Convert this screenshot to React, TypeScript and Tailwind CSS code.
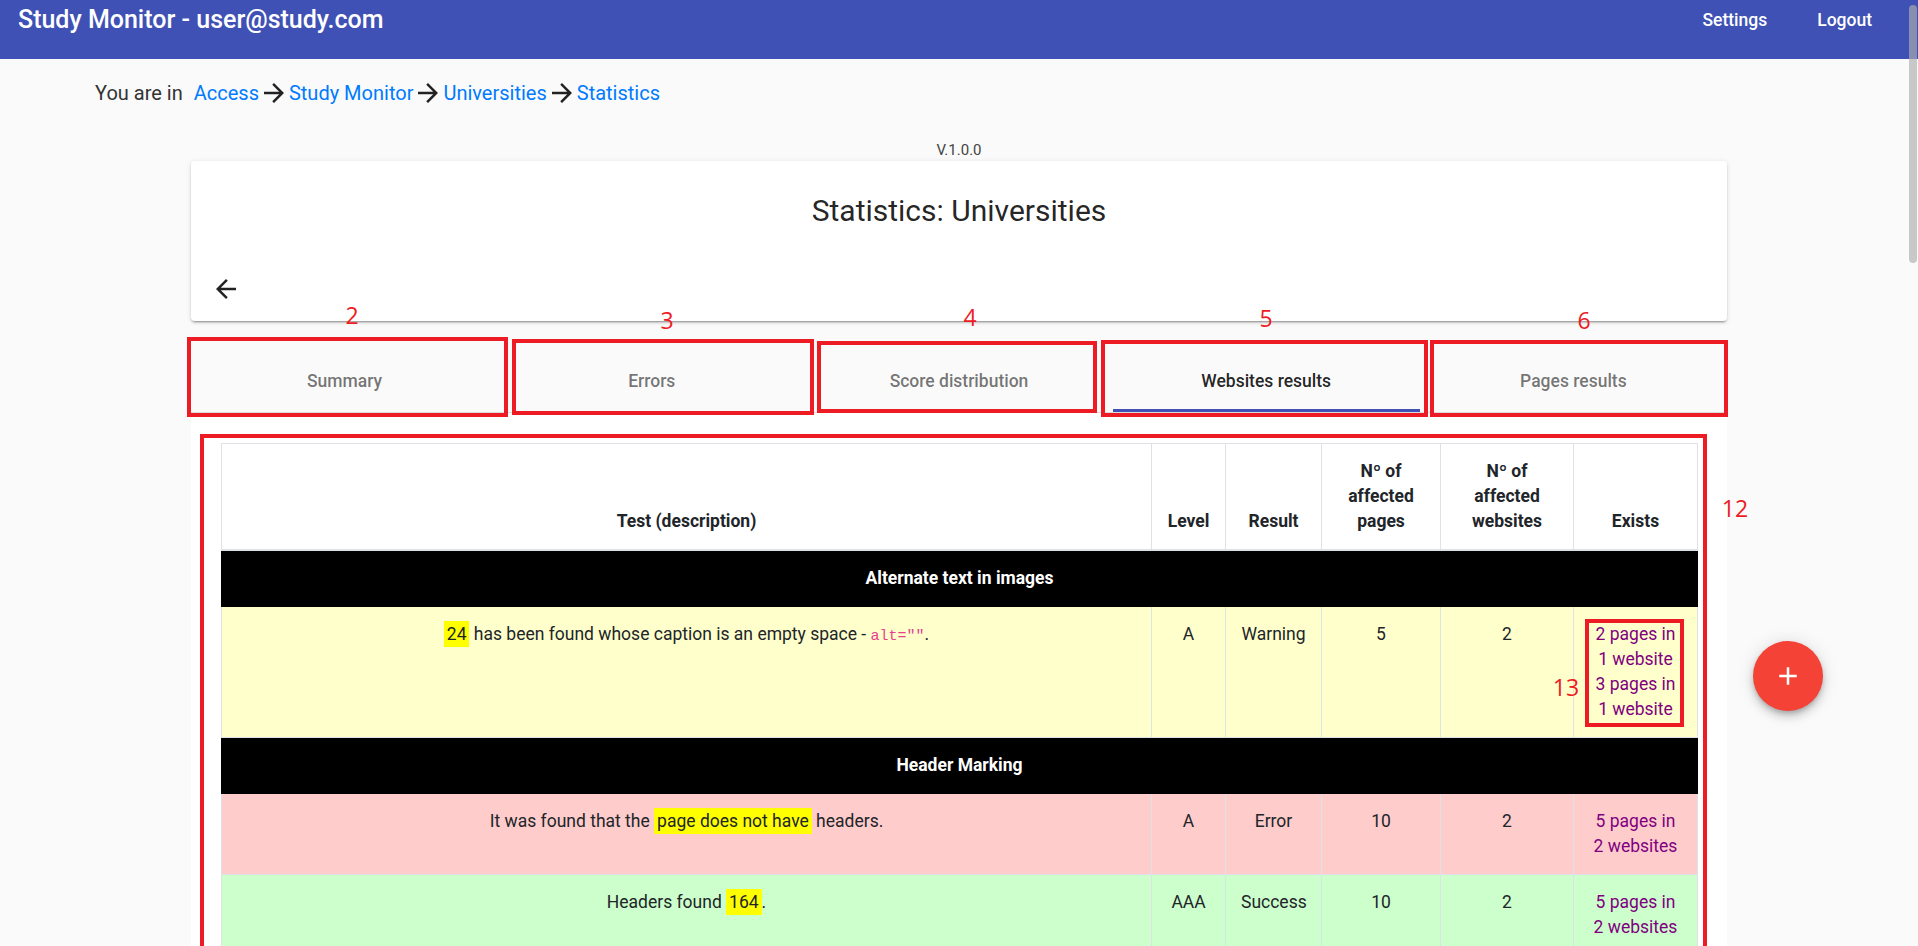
import React from "react";

const ArrowForward = ({ className }: { className?: string }) => (
  <svg viewBox="0 0 24 24" className={className} fill="currentColor">
    <path d="M12 4l-1.41 1.41L16.17 11H4v2h12.17l-5.58 5.59L12 20l8-8z" />
  </svg>
);

const ArrowBack = ({ className }: { className?: string }) => (
  <svg viewBox="0 0 24 24" className={className} fill="currentColor">
    <path d="M20 11H7.83l5.59-5.59L12 4l-8 8 8 8 1.41-1.41L7.83 13H20v-2z" />
  </svg>
);

const Plus = ({ className }: { className?: string }) => (
  <svg viewBox="0 0 24 24" className={className} fill="currentColor">
    <path d="M19 13h-6v6h-2v-6H5v-2h6V5h2v6h6v2z" />
  </svg>
);

const Mark = ({ children }: { children: React.ReactNode }) => (
  <span className="bg-[#ffff00] px-[3px] py-[3px]">{children}</span>
);

const tabs = ["Summary", "Errors", "Score distribution", "Websites results", "Pages results"];

const Exists = ({ lines }: { lines: string[] }) => (
  <div className="text-[#800080]">
    {lines.map((l, i) => (
      <div key={i}>{l}</div>
    ))}
  </div>
);

export default function App() {
  const th = "border border-[#dee2e6] border-b-2 align-bottom p-[15px] font-bold text-center";
  const td = "border border-[#dee2e6] align-top p-[15px] text-center";
  return (
    <div className="relative w-[1918px] h-[946px] overflow-hidden bg-[#fafafa] font-[Roboto,'Liberation_Sans',sans-serif] text-[rgba(0,0,0,0.87)]">
      {/* Header */}
      <header className="h-[59px] bg-[#3f51b5] text-white flex items-start justify-between pl-[18px] pr-[46px]">
        <div className="h-[40px] flex items-center text-[25px] font-medium">Study Monitor - user@study.com</div>
        <div className="h-[40px] flex items-center gap-[50px] text-[17.5px] font-medium">
          <span>Settings</span>
          <span>Logout</span>
        </div>
      </header>

      {/* Breadcrumb */}
      <div className="mt-[19px] h-[30px] flex items-center pl-[95px] text-[20px] text-[#333]">
        <span>You are in</span>
        <a className="ml-[11px] text-[#007bff]">Access</a>
        <ArrowForward className="w-[30px] h-[30px] text-[#222]" />
        <a className="text-[#007bff]">Study Monitor</a>
        <ArrowForward className="w-[30px] h-[30px] text-[#222]" />
        <a className="text-[#007bff]">Universities</a>
        <ArrowForward className="w-[30px] h-[30px] text-[#222]" />
        <a className="text-[#007bff]">Statistics</a>
      </div>

      {/* Version */}
      <div className="mt-[32px] h-[20px] leading-[20px] text-center text-[15px] text-[#444]">V.1.0.0</div>

      <div className="w-[1536px] mx-auto mt-[1px]">
        {/* Card */}
        <div className="bg-white rounded-[4px] h-[160px] pt-[30px] px-[20px] shadow-[0_3px_1px_-2px_rgba(0,0,0,0.2),0_2px_2px_0_rgba(0,0,0,0.14),0_1px_5px_0_rgba(0,0,0,0.12)]">
          <div className="h-[40px] leading-[40px] text-center text-[30px]">Statistics: Universities</div>
          <ArrowBack className="mt-[43px] w-[30px] h-[30px] text-[#222]" />
        </div>

        {/* Tabs */}
        <div className="mt-[21px] h-[71px] flex border-b border-[rgba(0,0,0,0.12)]">
          {tabs.map((t, i) => (
            <div
              key={t}
              className={
                "relative flex-1 flex items-center justify-center pt-[8px] text-[17.5px] font-medium " +
                (i === 3 ? "text-[rgba(0,0,0,0.87)]" : "text-[rgba(0,0,0,0.55)]")
              }
            >
              {t}
              {i === 3 && <div className="absolute left-0 right-0 bottom-0 h-[3px] bg-[#3f51b5]" />}
            </div>
          ))}
        </div>

        {/* Tab body */}
        <div className="bg-white px-[30px] pt-[30px] pb-[40px]">
          <table className="w-full table-fixed border-collapse text-[17.5px] leading-[25px] text-[#212529]">
            <colgroup>
              <col className="w-[930px]" />
              <col className="w-[74px]" />
              <col className="w-[96px]" />
              <col className="w-[119px]" />
              <col className="w-[133px]" />
              <col className="w-[124px]" />
            </colgroup>
            <thead>
              <tr>
                <th className={th}>Test (description)</th>
                <th className={th}>Level</th>
                <th className={th}>Result</th>
                <th className={th}>
                  Nº of
                  <br />
                  affected
                  <br />
                  pages
                </th>
                <th className={th}>
                  Nº of
                  <br />
                  affected
                  <br />
                  websites
                </th>
                <th className={th}>Exists</th>
              </tr>
            </thead>
            <tbody>
              <tr className="bg-black text-white">
                <td colSpan={6} className="border border-black p-[15px] text-center font-bold">
                  Alternate text in images
                </td>
              </tr>
              <tr className="bg-[#ffffcc]">
                <td className={td}>
                  <Mark>24</Mark> has been found whose caption is an empty space -{" "}
                  <code className="font-['Liberation_Mono',monospace] text-[15px] text-[#e83e8c]">alt=""</code>.
                </td>
                <td className={td}>A</td>
                <td className={td}>Warning</td>
                <td className={td}>5</td>
                <td className={td}>2</td>
                <td className={td}>
                  <Exists lines={["2 pages in", "1 website", "3 pages in", "1 website"]} />
                </td>
              </tr>
              <tr className="bg-black text-white">
                <td colSpan={6} className="border border-black p-[15px] text-center font-bold">
                  Header Marking
                </td>
              </tr>
              <tr className="bg-[#ffcccc]">
                <td className={td}>
                  It was found that the <Mark>page does not have</Mark> headers.
                </td>
                <td className={td}>A</td>
                <td className={td}>Error</td>
                <td className={td}>10</td>
                <td className={td}>2</td>
                <td className={td}>
                  <Exists lines={["5 pages in", "2 websites"]} />
                </td>
              </tr>
              <tr className="bg-[#ccffcc]">
                <td className={td}>
                  Headers found <Mark>164</Mark>.
                </td>
                <td className={td}>AAA</td>
                <td className={td}>Success</td>
                <td className={td}>10</td>
                <td className={td}>2</td>
                <td className={td}>
                  <Exists lines={["5 pages in", "2 websites"]} />
                </td>
              </tr>
            </tbody>
          </table>
        </div>
      </div>

      {/* FAB */}
      <div className="absolute left-[1753px] top-[641px] w-[70px] h-[70px] rounded-full bg-[#f44336] flex items-center justify-center text-white shadow-[0_3px_5px_-1px_rgba(0,0,0,0.2),0_6px_10px_0_rgba(0,0,0,0.14),0_1px_18px_0_rgba(0,0,0,0.12)]">
        <Plus className="w-[30px] h-[30px]" />
      </div>

      {/* Scrollbar thumb */}
      <div className="absolute right-[1px] top-[5px] w-[8px] h-[258px] rounded-full bg-[rgba(175,175,175,0.67)]" />

      {/* Annotations */}
      <div className="pointer-events-none">
        <div className="absolute left-[187px] top-[337px] w-[321px] h-[80px] border-[4px] border-[#ed1c24]" />
        <div className="absolute left-[512px] top-[339px] w-[302px] h-[76px] border-[4px] border-[#ed1c24]" />
        <div className="absolute left-[817px] top-[341px] w-[280px] h-[72px] border-[4px] border-[#ed1c24]" />
        <div className="absolute left-[1101px] top-[340px] w-[327px] h-[77px] border-[4px] border-[#ed1c24]" />
        <div className="absolute left-[1430px] top-[340px] w-[298px] h-[77px] border-[4px] border-[#ed1c24]" />
        <div className="absolute left-[200px] top-[434px] w-[1507px] h-[520px] border-[4px] border-[#ed1c24]" />
        <div className="absolute left-[1585px] top-[619px] w-[99px] h-[108px] border-[4px] border-[#ed1c24]" />

        <div className="absolute left-[322px] top-[301px] w-[60px] h-[28px] leading-[28px] text-center text-[23px] text-[#ed1c24] font-['Open_Sans',sans-serif]">2</div>
        <div className="absolute left-[637px] top-[306px] w-[60px] h-[28px] leading-[28px] text-center text-[23px] text-[#ed1c24] font-['Open_Sans',sans-serif]">3</div>
        <div className="absolute left-[940px] top-[303px] w-[60px] h-[28px] leading-[28px] text-center text-[23px] text-[#ed1c24] font-['Open_Sans',sans-serif]">4</div>
        <div className="absolute left-[1236px] top-[304px] w-[60px] h-[28px] leading-[28px] text-center text-[23px] text-[#ed1c24] font-['Open_Sans',sans-serif]">5</div>
        <div className="absolute left-[1554px] top-[306px] w-[60px] h-[28px] leading-[28px] text-center text-[23px] text-[#ed1c24] font-['Open_Sans',sans-serif]">6</div>
        <div className="absolute left-[1705px] top-[494px] w-[60px] h-[28px] leading-[28px] text-center text-[23px] text-[#ed1c24] font-['Open_Sans',sans-serif]">12</div>
        <div className="absolute left-[1536px] top-[673px] w-[60px] h-[28px] leading-[28px] text-center text-[23px] text-[#ed1c24] font-['Open_Sans',sans-serif]">13</div>
      </div>
    </div>
  );
}
